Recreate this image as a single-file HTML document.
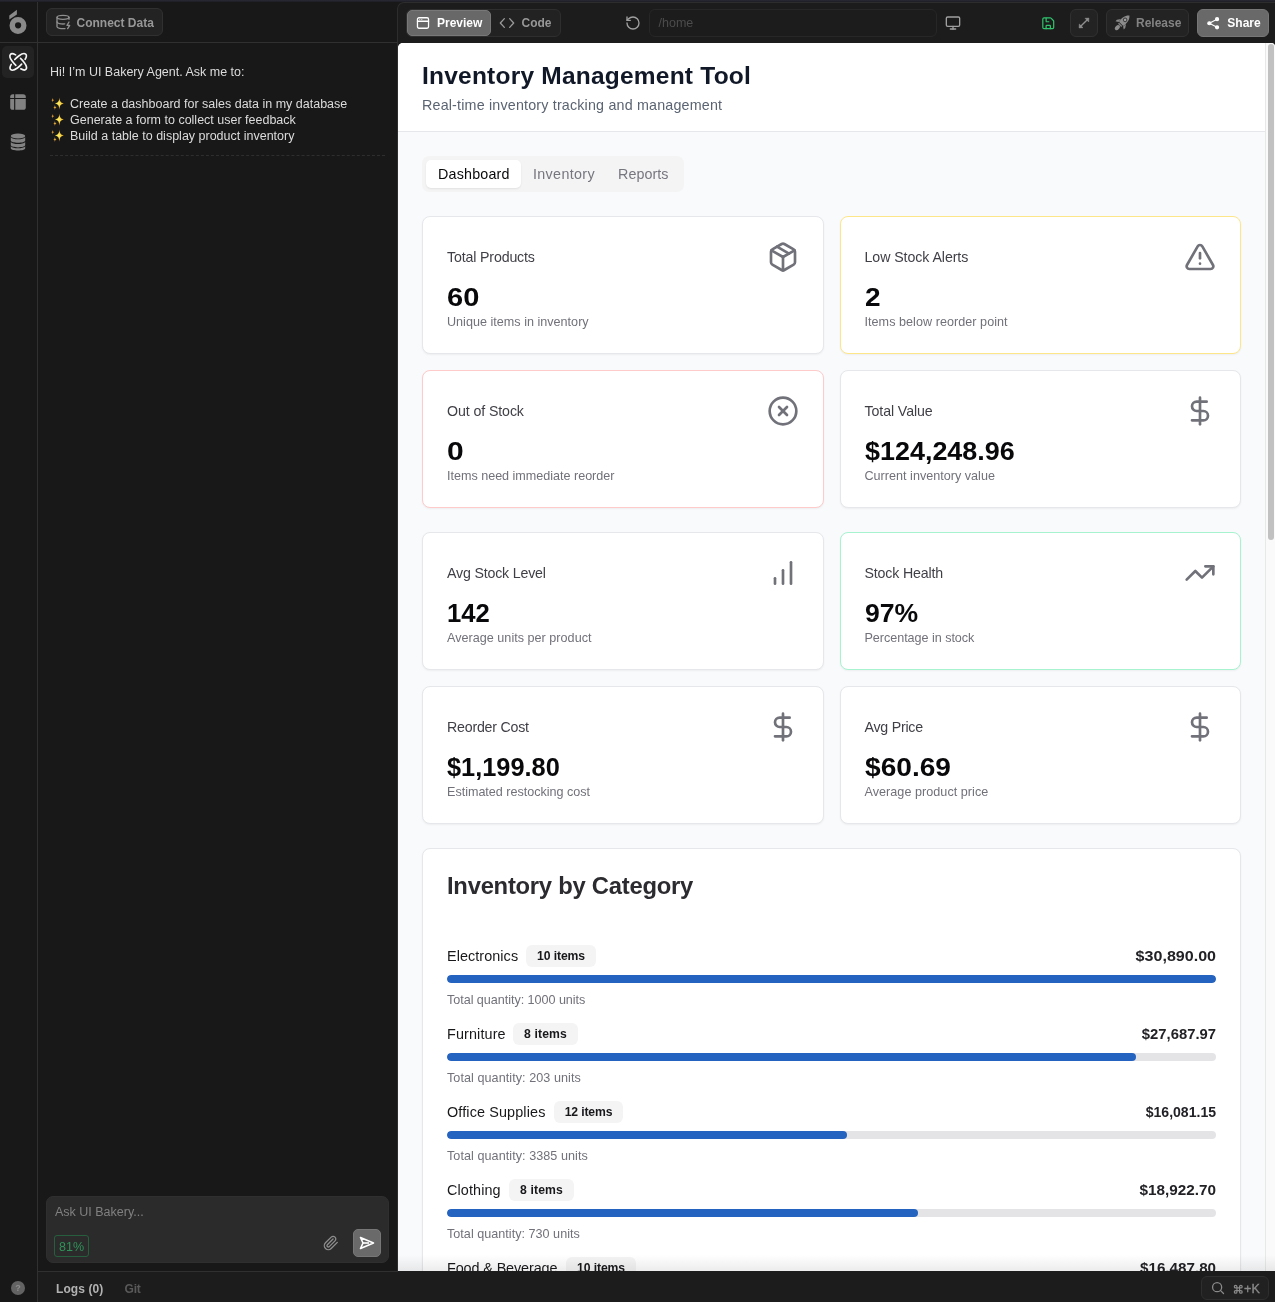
<!DOCTYPE html>
<html>
<head>
<meta charset="utf-8">
<title>UI Bakery</title>
<style>
*{box-sizing:border-box;margin:0;padding:0}
html,body{width:1275px;height:1302px;overflow:hidden;background:#181818;font-family:"Liberation Sans",sans-serif;}
body{position:relative;color:#d4d4d4;will-change:transform}
.abs{position:absolute}
svg{display:block}
/* shell */
#topline{left:0;top:0;width:1275px;height:2px;background:linear-gradient(#2a2a34,#1d1d24)}
#rail{left:0;top:0;width:38px;height:1302px;border-right:1px solid #303030}
#hline{left:0;top:42px;width:397px;height:1px;background:#303030}
#bline{left:38px;top:1271px;width:360px;height:1px;background:#303030}
.btn{position:absolute;height:28px;border-radius:6px;border:1px solid #303030;background:#232323;color:#8f8f8f;font-weight:bold;font-size:12.5px;line-height:26px;white-space:nowrap}
.tb{font-size:12px;font-weight:bold;line-height:15px;white-space:nowrap}
.chat{font-size:12.5px;color:#dcdcdc;line-height:15px;white-space:nowrap}
/* preview */
#pv{left:398px;top:43px;width:877px;height:1228px;background:#f9fafb;border-top-left-radius:5px;border-top-right-radius:4px;overflow:hidden}
#hdr{left:0;top:0;width:867px;height:89px;background:#fff;border-bottom:1px solid #e5e7eb}
.card{position:absolute;background:#fff;border:1px solid #e5e7eb;border-radius:8px;box-shadow:0 1px 2px rgba(0,0,0,.05)}
.stat{width:401.500px;height:138px}
.stat .t{position:absolute;left:24px;top:32px;font-size:14px;color:#3f3f46;white-space:nowrap}
.stat .v{position:absolute;left:24px;top:66px;transform-origin:0 0;font-size:25px;font-weight:bold;color:#09090b;white-space:nowrap}
.stat .d{position:absolute;left:24px;top:98px;font-size:12.5px;color:#71717a;white-space:nowrap}
.stat svg{position:absolute;right:24px;top:24px}
#ttl{left:24px;top:18px;font-size:24.500px;font-weight:bold;color:#111827;line-height:30px;white-space:nowrap;letter-spacing:.2px}
#sub{left:24px;top:53px;font-size:14.500px;color:#5b6472;line-height:18px;white-space:nowrap}
#tabs{left:24px;top:113px;width:262px;height:36px;border-radius:7px;background:#f4f4f5}
#tabA{left:28px;top:117px;width:95px;height:28px;border-radius:5px;background:#fff;box-shadow:0 1px 2px rgba(0,0,0,.08)}
.tab{top:122px;font-size:14.500px;line-height:18px;color:#76767f;white-space:nowrap}
#cath{left:24px;top:22px;font-size:24.500px;font-weight:bold;color:#2c2c30;line-height:30px;white-space:nowrap}
#sbt{left:867px;top:0;width:10px;height:1228px;background:#fafafa;border-left:1px solid #e8e8e8}
#sbth{left:870px;top:1px;width:6px;height:496px;border-radius:3px;background:#c1c1c1}
.row{position:absolute;left:24px;width:769px;height:78px}
.row .n{position:absolute;left:0;top:0;font-size:15px;color:#18181b;white-space:nowrap;line-height:22px}
.row .b{position:absolute;top:0;height:22px;border-radius:6px;background:#f4f4f5;color:#18181b;font-weight:bold;line-height:23px;text-align:center;white-space:nowrap}
.row .p{position:absolute;right:0;top:0;transform-origin:100% 0;font-size:14.5px;font-weight:bold;color:#222226;white-space:nowrap;line-height:22px}
.row .bar{position:absolute;left:0;top:30px;width:769px;height:8px;border-radius:4px;background:#e4e4e7;overflow:hidden}
.row .bar i{display:block;height:8px;border-radius:4px;background:#2563c0}
.row .q{position:absolute;left:0;top:48px;font-size:12.5px;color:#71717a;white-space:nowrap}
</style>
</head>
<body>
<div class="abs" id="rail"></div>
<div class="abs" id="hline"></div>
<div class="abs" style="left:397px;top:2px;width:878px;height:1270px;background:#1c1c1c;border-left:1px solid #2d2d2d;border-top:1px solid #2d2d2d;border-top-left-radius:7px"></div>
<div class="abs" style="left:38px;top:1271px;width:1237px;height:31px;background:#1c1c1c"></div>
<div class="abs" id="bline"></div>
<div class="abs" id="topline"></div>

<!-- rail icons -->
<svg class="abs" style="left:0;top:0" width="38" height="42" viewBox="0 0 38 42"><path fill="#8a8a8a" fill-rule="evenodd" d="M18 16.900a8.500 8.500 0 1 0 0 17 8.500 8.500 0 0 0 0-17zM18.100 22.200a3.100 3.100 0 1 1 0 6.200 3.100 3.100 0 0 1 0-6.200z"/><path fill="#8a8a8a" d="M9.300 15.600L16.900 9.800V14.500L9.300 19.500z"/></svg>
<div class="abs" style="left:2px;top:46px;width:32px;height:32px;border-radius:5px;background:#232323"></div>
<svg class="abs" style="left:4px;top:48px" width="28" height="28" viewBox="-14.200 -13.850 28 28" fill="none" stroke="#f5f5f5" stroke-width="1.650" stroke-linecap="round" stroke-linejoin="round"><path transform="rotate(0)" d="M-2.560-6.950C-4.650-8.180-7.070-8.370-7.810-7.440C-8.740-6.230-7.900-3.260-6.140-.84C-4.930.84-3.630 2.230-2.330 3.440"/><path transform="rotate(90)" d="M-2.560-6.950C-4.650-8.180-7.070-8.370-7.810-7.440C-8.740-6.230-7.900-3.260-6.140-.84C-4.930.84-3.630 2.230-2.330 3.440"/><path transform="rotate(180)" d="M-2.560-6.950C-4.650-8.180-7.070-8.370-7.810-7.440C-8.740-6.230-7.900-3.260-6.140-.84C-4.930.84-3.630 2.230-2.330 3.440"/><path transform="rotate(270)" d="M-2.560-6.950C-4.650-8.180-7.070-8.370-7.810-7.440C-8.740-6.230-7.900-3.260-6.140-.84C-4.930.84-3.630 2.230-2.330 3.440"/></svg>
<svg class="abs" style="left:10px;top:94px" width="16" height="16" viewBox="0 0 16 16"><rect x=".2" y=".2" width="15.600" height="15.600" rx="2.600" fill="#828282"/><path d="M4.700 0V16M0 4.500H16" stroke="#181818" stroke-width="1.150" fill="none"/></svg>
<svg class="abs" style="left:10px;top:132px" width="16" height="20" viewBox="0 0 16 20" fill="#828282"><ellipse cx="8" cy="3.900" rx="7.200" ry="2.500"/><path d="M.8 5.300c1.200 1.500 4 2 7.200 2s6-.5 7.200-2v3.200c0 1.300-3.200 2.300-7.200 2.300s-7.200-1-7.200-2.300z"/><path d="M.8 9.900c1.200 1.500 4 2 7.200 2s6-.5 7.200-2v3.200c0 1.300-3.200 2.300-7.200 2.300s-7.200-1-7.200-2.300z"/><path d="M.8 14.300c1.200 1.500 4 2 7.200 2s6-.5 7.200-2v1.900c0 1.300-3.200 2.300-7.200 2.300s-7.200-1-7.200-2.300z"/></svg>
<div class="abs" style="left:11px;top:1281px;width:14px;height:14px;border-radius:7px;background:#636363;color:#8e8e8e;font-size:9px;font-weight:bold;line-height:14px;text-align:center">?</div>

<!-- top bar -->
<div class="btn" style="left:46px;top:8px;width:117px"></div>
<svg class="abs" style="left:55px;top:14px" width="16" height="16" viewBox="0 0 24 24" fill="none" stroke="#8f8f8f" stroke-width="2" stroke-linecap="round" stroke-linejoin="round"><ellipse cx="12" cy="5" rx="9" ry="3"/><path d="M3 5V19A9 3 0 0 0 15 21.840"/><path d="M21 5V8"/><path d="M21 12L18 17H22L19 22"/><path d="M3 12A9 3 0 0 0 14.590 14.870"/></svg>
<div class="abs tb" style="left:76.500px;top:16px;color:#979797">Connect Data</div>

<div class="abs" style="left:406px;top:9px;width:155px;height:28px;border-radius:6px;border:1px solid #2e2e2e;background:#222"></div>
<div class="abs" style="left:407px;top:10px;width:84px;height:26px;border-radius:5px;background:#686868;border:1px solid #787878"></div>
<svg class="abs" style="left:416px;top:16px" width="14" height="14" viewBox="0 0 24 24" fill="none" stroke="#fff" stroke-width="2.200" stroke-linecap="round" stroke-linejoin="round"><rect width="19" height="18" x="2.500" y="3" rx="2.500"/><path d="M2.500 9h19"/><path d="M6.500 6h.01M10 6h.01" stroke-width="1.600"/></svg>
<div class="abs tb" style="left:437px;top:16px;color:#fff">Preview</div>
<svg class="abs" style="left:499px;top:15px" width="16" height="16" viewBox="0 0 24 24" fill="none" stroke="#9a9a9a" stroke-width="2" stroke-linecap="round" stroke-linejoin="round"><polyline points="16 18.500 22 12 16 5.500"/><polyline points="8 5.500 2 12 8 18.500"/></svg>
<div class="abs tb" style="left:521.500px;top:16px;color:#979797">Code</div>

<svg class="abs" style="left:625px;top:15px" width="16" height="16" viewBox="0 0 24 24" fill="none" stroke="#a0a0a0" stroke-width="2" stroke-linecap="round" stroke-linejoin="round"><path d="M3 12a9 9 0 1 0 9-9 9.750 9.750 0 0 0-6.740 2.740L3 8"/><path d="M3 3v5h5"/></svg>
<div class="abs" style="left:649px;top:9px;width:288px;height:28px;border-radius:6px;border:1px solid #272727;background:#1c1c1c"></div>
<div class="abs" style="left:658.500px;top:16px;font-size:12.500px;color:#4c4c4c;line-height:15px">/home</div>
<svg class="abs" style="left:945px;top:15px" width="16" height="16" viewBox="0 0 24 24" fill="none" stroke="#a0a0a0" stroke-width="2" stroke-linecap="round" stroke-linejoin="round"><rect width="20" height="14" x="2" y="3" rx="2"/><line x1="8" x2="16" y1="21" y2="21"/><line x1="12" x2="12" y1="17" y2="21"/></svg>
<svg class="abs" style="left:1041px;top:15.700px" width="14.500" height="14.500" viewBox="0 0 24 24" fill="none" stroke="#2ec46d" stroke-width="2" stroke-linecap="round" stroke-linejoin="round"><path d="M15.200 3a2 2 0 0 1 1.400.600l3.800 3.800a2 2 0 0 1 .6 1.400V19a2 2 0 0 1-2 2H5a2 2 0 0 1-2-2V5a2 2 0 0 1 2-2z"/><path d="M15.500 21v-4.500a1 1 0 0 0-1-1h-5a1 1 0 0 0-1 1V21"/><path d="M8.500 3.500v5a1 1 0 0 0 1 1h3.500"/></svg>
<div class="btn" style="left:1070px;top:9px;width:28px"></div>
<svg class="abs" style="left:1078px;top:17px" width="12" height="12" viewBox="0 0 12 12"><path d="M2.200 9.800L9.800 2.200" stroke="#8f8f8f" stroke-width="1.350" fill="none"/><path fill="#8f8f8f" stroke="#8f8f8f" stroke-width=".5" stroke-linejoin="round" d="M10.900 1.100L7 1.300L10.700 5zM1.100 10.900L1.300 7L5 10.700z"/></svg>
<div class="btn" style="left:1106px;top:9px;width:83px"></div>
<svg class="abs" style="left:1111.500px;top:12.400px" width="21" height="21" viewBox="0 0 24 24"><g transform="rotate(45 12 12)"><path fill="#8c8c8c" d="M12 .8C15.600 3.800 16.600 9 15.400 14.200H8.600C7.400 9 8.400 3.800 12 .8z"/><circle cx="12" cy="7.800" r="2" fill="#a2a2a2" stroke="#3e3e3e" stroke-width="1.100"/><rect x="9.400" y="15" width="5.200" height="1.700" fill="#808080"/><ellipse cx="12" cy="20.300" rx="2.300" ry="3.300" fill="#8c8c8c"/><path fill="#888" d="M7.900 10.300L5.300 14.300V16.700L8.300 14.700zM16.100 10.300L18.700 14.300V16.700L15.700 14.700z"/></g></svg>
<div class="abs tb" style="left:1136px;top:16px;color:#838383">Release</div>
<div class="abs" style="left:1197px;top:9px;width:72px;height:28px;border-radius:6px;background:#696969;border:1px solid #777"></div>
<svg class="abs" style="left:1205.500px;top:15.800px" width="14.500" height="14.500" viewBox="0 0 24 24" fill="#fff" stroke="#fff" stroke-width="2"><circle cx="18.300" cy="5.300" r="2.500"/><circle cx="5.500" cy="12" r="2.500"/><circle cx="18.300" cy="18.700" r="2.500"/><path d="M5.500 12L18.300 5.300M5.500 12L18.300 18.700" fill="none" stroke-width="1.900"/></svg>
<div class="abs tb" style="left:1227.300px;top:16px;color:#fff">Share</div>

<!-- chat -->
<svg width="0" height="0" style="position:absolute"><defs><radialGradient id="spk" gradientUnits="userSpaceOnUse" cx="8" cy="7.400" r="7"><stop offset="0" stop-color="#fff064"/><stop offset=".45" stop-color="#f6d045"/><stop offset="1" stop-color="#d98a2b"/></radialGradient></defs></svg>
<div class="abs chat" style="left:50px;top:65px">Hi! I’m UI Bakery Agent. Ask me to:</div>
<div class="abs chat" style="left:70px;top:97px">Create a dashboard for sales data in my database</div>
<div class="abs chat" style="left:70px;top:113px">Generate a form to collect user feedback</div>
<div class="abs chat" style="left:70px;top:129px">Build a table to display product inventory</div>
<svg class="abs" style="left:50px;top:96px" width="16" height="16" viewBox="0 0 16 16"><g fill="url(#spk)"><path d="M9.400 1.500c.35 3.700 1 5.300 4.500 5.900-3.500.6-4.150 2.200-4.500 6.400-.35-4.200-1-5.800-4.500-6.400 3.500-.6 4.150-2.200 4.500-5.900z"/><path d="M2.700 1.700c.15 1.600.5 2.200 1.700 2.400-1.200.2-1.550.8-1.700 2.400-.15-1.600-.5-2.200-1.700-2.400 1.200-.2 1.550-.8 1.700-2.400z"/><path d="M4.900 9.100c.15 1.600.5 2.200 1.700 2.400-1.200.2-1.550.8-1.700 2.400-.15-1.600-.5-2.200-1.700-2.400 1.200-.2 1.550-.8 1.700-2.400z"/></g></svg>
<svg class="abs" style="left:50px;top:112px" width="16" height="16" viewBox="0 0 16 16"><g fill="url(#spk)"><path d="M9.400 1.500c.35 3.700 1 5.300 4.500 5.900-3.500.6-4.150 2.200-4.500 6.400-.35-4.200-1-5.800-4.500-6.400 3.500-.6 4.150-2.200 4.500-5.900z"/><path d="M2.700 1.700c.15 1.600.5 2.200 1.700 2.400-1.200.2-1.550.8-1.700 2.400-.15-1.600-.5-2.200-1.700-2.400 1.200-.2 1.550-.8 1.700-2.400z"/><path d="M4.900 9.100c.15 1.600.5 2.200 1.700 2.400-1.200.2-1.550.8-1.700 2.400-.15-1.600-.5-2.200-1.700-2.400 1.200-.2 1.550-.8 1.700-2.400z"/></g></svg>
<svg class="abs" style="left:50px;top:128px" width="16" height="16" viewBox="0 0 16 16"><g fill="url(#spk)"><path d="M9.400 1.500c.35 3.700 1 5.300 4.500 5.900-3.500.6-4.150 2.200-4.500 6.400-.35-4.200-1-5.800-4.500-6.400 3.500-.6 4.150-2.200 4.500-5.900z"/><path d="M2.700 1.700c.15 1.600.5 2.200 1.700 2.400-1.200.2-1.550.8-1.700 2.400-.15-1.600-.5-2.200-1.700-2.400 1.200-.2 1.550-.8 1.700-2.400z"/><path d="M4.900 9.100c.15 1.600.5 2.200 1.700 2.400-1.200.2-1.550.8-1.700 2.400-.15-1.600-.5-2.200-1.700-2.400 1.200-.2 1.550-.8 1.700-2.400z"/></g></svg>
<div class="abs" style="left:50px;top:155px;width:335px;height:0;border-top:1px dashed #2e2e2e"></div>

<div class="abs" style="left:46px;top:1196px;width:343px;height:67px;border-radius:7px;background:#2b2b2b;border:1px solid #2f2f2f"></div>
<div class="abs" style="left:55px;top:1205px;font-size:12.500px;color:#808080;line-height:15px">Ask UI Bakery...</div>
<div class="abs" style="left:54px;top:1235px;width:35px;height:22px;border-radius:3px;border:1px solid #275f3e;color:#2f9359;font-size:12.500px;line-height:22px;text-align:center">81%</div>
<svg class="abs" style="left:323px;top:1235px" width="16" height="16" viewBox="0 0 24 24" fill="none" stroke="#8e8e8e" stroke-width="2" stroke-linecap="round" stroke-linejoin="round"><path d="m21.440 11.050-9.190 9.190a6 6 0 0 1-8.490-8.490l8.570-8.570A4 4 0 1 1 18 8.840l-8.590 8.570a2 2 0 0 1-2.830-2.830l8.490-8.480"/></svg>
<div class="abs" style="left:353px;top:1229px;width:28px;height:28px;border-radius:5px;background:#6a6a6a;border:1px solid #777"></div>
<svg class="abs" style="left:359px;top:1235px" width="16" height="16" viewBox="0 0 16 16" fill="none" stroke="#fff" stroke-width="1.600" stroke-linejoin="round"><path d="M1.500 2.500l13 5.500-13 5.500 2.500-5.500z"/><path d="M4 8h6"/></svg>

<div class="abs" style="left:56px;top:1282px;font-size:12px;font-weight:bold;color:#b2b2b2;line-height:15px;letter-spacing:.1px">Logs (0)</div>
<div class="abs" style="left:124.500px;top:1282px;font-size:12px;font-weight:bold;color:#595959;line-height:15px;letter-spacing:-.2px">Git</div>
<div class="abs" style="left:1201px;top:1276px;width:68px;height:24px;border-radius:6px;border:1px solid #2e2e2e;background:#212121"></div>
<svg class="abs" style="left:1211px;top:1281px" width="14" height="14" viewBox="0 0 24 24" fill="none" stroke="#8a8a8a" stroke-width="2.200" stroke-linecap="round"><circle cx="10.500" cy="10.500" r="7.800"/><path d="m21.500 21.500-5.400-5.400"/></svg>
<svg class="abs" style="left:1232.500px;top:1283.500px" width="10.500" height="10.500" viewBox="0 0 24 24" fill="none" stroke="#8a8a8a" stroke-width="2.700" stroke-linecap="round" stroke-linejoin="round"><path d="M15 6v12a3 3 0 1 0 3-3H6a3 3 0 1 0 3 3V6a3 3 0 1 0-3 3h12a3 3 0 1 0-3-3"/></svg>
<div class="abs" style="left:1244px;top:1282px;font-size:12.500px;color:#8a8a8a;line-height:15px;-webkit-text-stroke:.35px #8a8a8a;letter-spacing:.3px">+K</div>


<div class="abs" id="pv">
  <div class="abs" id="hdr"></div>
  <div class="abs" id="ttl" style="font-size:24.5px;letter-spacing:0.22px">Inventory Management Tool</div>
  <div class="abs" id="sub" style="font-size:14.3px;letter-spacing:0.18px">Real-time inventory tracking and management</div>
  <div class="abs" id="tabs"></div>
  <div class="abs" id="tabA"></div>
  <div class="abs tab" style="left:40px;color:#09090b;font-size:14.3px;letter-spacing:0.19px">Dashboard</div>
  <div class="abs tab" style="left:135px;font-size:14.3px;letter-spacing:0.34px">Inventory</div>
  <div class="abs tab" style="left:220px;font-size:14.3px;letter-spacing:0.07px">Reports</div>
  <div class="card stat" style="left:24px;top:173px;"><div class="t" style="font-size:14.2px;letter-spacing:-0.15px">Total Products</div><div class="v" style="font-size:25.5px;transform:scaleX(1.138)">60</div><div class="d" style="font-size:12.6px;letter-spacing:0.01px">Unique items in inventory</div><svg width="32" height="32" viewBox="0 0 24 24" fill="none" stroke="#71717a" stroke-width="2" stroke-linecap="round" stroke-linejoin="round"><path d="M11 21.730a2 2 0 0 0 2 0l7-4A2 2 0 0 0 21 16V8a2 2 0 0 0-1-1.730l-7-4a2 2 0 0 0-2 0l-7 4A2 2 0 0 0 3 8v8a2 2 0 0 0 1 1.730z"/><path d="M12 22V12"/><polyline points="3.290 7 12 12 20.710 7"/><path d="m7.500 4.270 9 5.150"/></svg></div>
  <div class="card stat" style="left:441.5px;top:173px;border-color:#fde68a"><div class="t" style="font-size:14.2px;letter-spacing:-0.07px">Low Stock Alerts</div><div class="v" style="font-size:25.5px;transform:scaleX(1.099)">2</div><div class="d" style="font-size:12.6px;letter-spacing:0.04px">Items below reorder point</div><svg width="32" height="32" viewBox="0 0 24 24" fill="none" stroke="#71717a" stroke-width="2" stroke-linecap="round" stroke-linejoin="round"><path d="m21.730 18-8-14a2 2 0 0 0-3.480 0l-8 14A2 2 0 0 0 4 21h16a2 2 0 0 0 1.730-3"/><path d="M12 9v4"/><path d="M12 17h.010"/></svg></div>
  <div class="card stat" style="left:24px;top:327px;border-color:#fecaca"><div class="t" style="font-size:14.2px;letter-spacing:-0.10px">Out of Stock</div><div class="v" style="font-size:25.5px;transform:scaleX(1.176)">0</div><div class="d" style="font-size:12.6px;letter-spacing:-0.02px">Items need immediate reorder</div><svg width="32" height="32" viewBox="0 0 24 24" fill="none" stroke="#71717a" stroke-width="2" stroke-linecap="round" stroke-linejoin="round"><circle cx="12" cy="12" r="10"/><path d="m15 9-6 6"/><path d="m9 9 6 6"/></svg></div>
  <div class="card stat" style="left:441.5px;top:327px;"><div class="t" style="font-size:14.2px;letter-spacing:-0.09px">Total Value</div><div class="v" style="font-size:25.5px;transform:scaleX(1.056)">$124,248.96</div><div class="d" style="font-size:12.6px;letter-spacing:0.01px">Current inventory value</div><svg width="32" height="32" viewBox="0 0 24 24" fill="none" stroke="#71717a" stroke-width="2" stroke-linecap="round" stroke-linejoin="round"><line x1="12" x2="12" y1="2" y2="22"/><path d="M17 5H9.500a3.500 3.500 0 0 0 0 7h5a3.500 3.500 0 0 1 0 7H6"/></svg></div>
  <div class="card stat" style="left:24px;top:489px;"><div class="t" style="font-size:14.2px;letter-spacing:-0.18px">Avg Stock Level</div><div class="v" style="font-size:25.5px;transform:scaleX(1.006)">142</div><div class="d" style="font-size:12.6px;letter-spacing:0.02px">Average units per product</div><svg width="32" height="32" viewBox="0 0 24 24" fill="none" stroke="#71717a" stroke-width="2" stroke-linecap="round" stroke-linejoin="round"><line x1="12" x2="12" y1="20" y2="10"/><line x1="18" x2="18" y1="20" y2="4"/><line x1="6" x2="6" y1="20" y2="16"/></svg></div>
  <div class="card stat" style="left:441.5px;top:489px;border-color:#a7f3d0"><div class="t" style="font-size:14.2px;letter-spacing:-0.16px">Stock Health</div><div class="v" style="font-size:25.5px;transform:scaleX(1.042)">97%</div><div class="d" style="font-size:12.6px;letter-spacing:-0.04px">Percentage in stock</div><svg width="32" height="32" viewBox="0 0 24 24" fill="none" stroke="#71717a" stroke-width="2" stroke-linecap="round" stroke-linejoin="round"><polyline points="22 7 13.500 15.500 8.500 10.500 2 17"/><polyline points="16 7 22 7 22 13"/></svg></div>
  <div class="card stat" style="left:24px;top:643px;"><div class="t" style="font-size:14.2px;letter-spacing:-0.21px">Reorder Cost</div><div class="v" style="font-size:25.5px;transform:scaleX(0.994)">$1,199.80</div><div class="d" style="font-size:12.6px;letter-spacing:-0.02px">Estimated restocking cost</div><svg width="32" height="32" viewBox="0 0 24 24" fill="none" stroke="#71717a" stroke-width="2" stroke-linecap="round" stroke-linejoin="round"><line x1="12" x2="12" y1="2" y2="22"/><path d="M17 5H9.500a3.500 3.500 0 0 0 0 7h5a3.500 3.500 0 0 1 0 7H6"/></svg></div>
  <div class="card stat" style="left:441.5px;top:643px;"><div class="t" style="font-size:14.2px;letter-spacing:-0.23px">Avg Price</div><div class="v" style="font-size:25.5px;transform:scaleX(1.102)">$60.69</div><div class="d" style="font-size:12.6px;letter-spacing:0.04px">Average product price</div><svg width="32" height="32" viewBox="0 0 24 24" fill="none" stroke="#71717a" stroke-width="2" stroke-linecap="round" stroke-linejoin="round"><line x1="12" x2="12" y1="2" y2="22"/><path d="M17 5H9.500a3.500 3.500 0 0 0 0 7h5a3.500 3.500 0 0 1 0 7H6"/></svg></div>
  <div class="card" id="cat" style="left:24px;top:805px;width:819px;height:600px">
    <div class="abs" id="cath" style="font-size:23.8px;letter-spacing:-0.25px">Inventory by Category</div>
    <div class="row" style="top:96px"><div class="n" style="font-size:14.4px;letter-spacing:0.07px">Electronics</div><div class="b" style="left:79px;width:70px;font-size:12.2px;letter-spacing:-0.09px">10 items</div><div class="p" style="font-size:14.6px;transform:scaleX(1.101)">$30,890.00</div><div class="bar"><i style="width:100%"></i></div><div class="q" style="font-size:12.6px;letter-spacing:-0.04px">Total quantity: 1000 units</div></div>
    <div class="row" style="top:174px"><div class="n" style="font-size:14.4px;letter-spacing:0.13px">Furniture</div><div class="b" style="left:66px;width:65px;font-size:12.2px;letter-spacing:0.16px">8 items</div><div class="p" style="font-size:14.6px;transform:scaleX(1.016)">$27,687.97</div><div class="bar"><i style="width:89.6%"></i></div><div class="q" style="font-size:12.6px;letter-spacing:0.06px">Total quantity: 203 units</div></div>
    <div class="row" style="top:252px"><div class="n" style="font-size:14.4px;letter-spacing:0.13px">Office Supplies</div><div class="b" style="left:107px;width:69px;font-size:12.2px;letter-spacing:-0.13px">12 items</div><div class="p" style="font-size:14.6px;transform:scaleX(0.963)">$16,081.15</div><div class="bar"><i style="width:52.0%"></i></div><div class="q" style="font-size:12.6px;letter-spacing:0.06px">Total quantity: 3385 units</div></div>
    <div class="row" style="top:330px"><div class="n" style="font-size:14.4px;letter-spacing:0.11px">Clothing</div><div class="b" style="left:62px;width:65px;font-size:12.2px;letter-spacing:0.16px">8 items</div><div class="p" style="font-size:14.6px;transform:scaleX(1.048)">$18,922.70</div><div class="bar"><i style="width:61.2%"></i></div><div class="q" style="font-size:12.6px;letter-spacing:0.02px">Total quantity: 730 units</div></div>
    <div class="row" style="top:408px"><div class="n" style="font-size:14.4px;letter-spacing:-0.11px">Food &amp; Beverage</div><div class="b" style="left:119px;width:70px;font-size:12.2px;letter-spacing:-0.09px">10 items</div><div class="p" style="font-size:14.6px;transform:scaleX(1.041)">$16,487.80</div><div class="bar"><i style="width:53.4%"></i></div><div class="q" style="font-size:12.6px;letter-spacing:0.02px">Total quantity: 2100 units</div></div>
  </div>
  <div class="abs" id="sbt"></div>
  <div class="abs" id="sbth"></div>
  <div class="abs" style="left:0;top:1212px;width:877px;height:16px;background:linear-gradient(rgba(0,0,0,0),rgba(0,0,0,.075))"></div>
</div>
</body>
</html>
